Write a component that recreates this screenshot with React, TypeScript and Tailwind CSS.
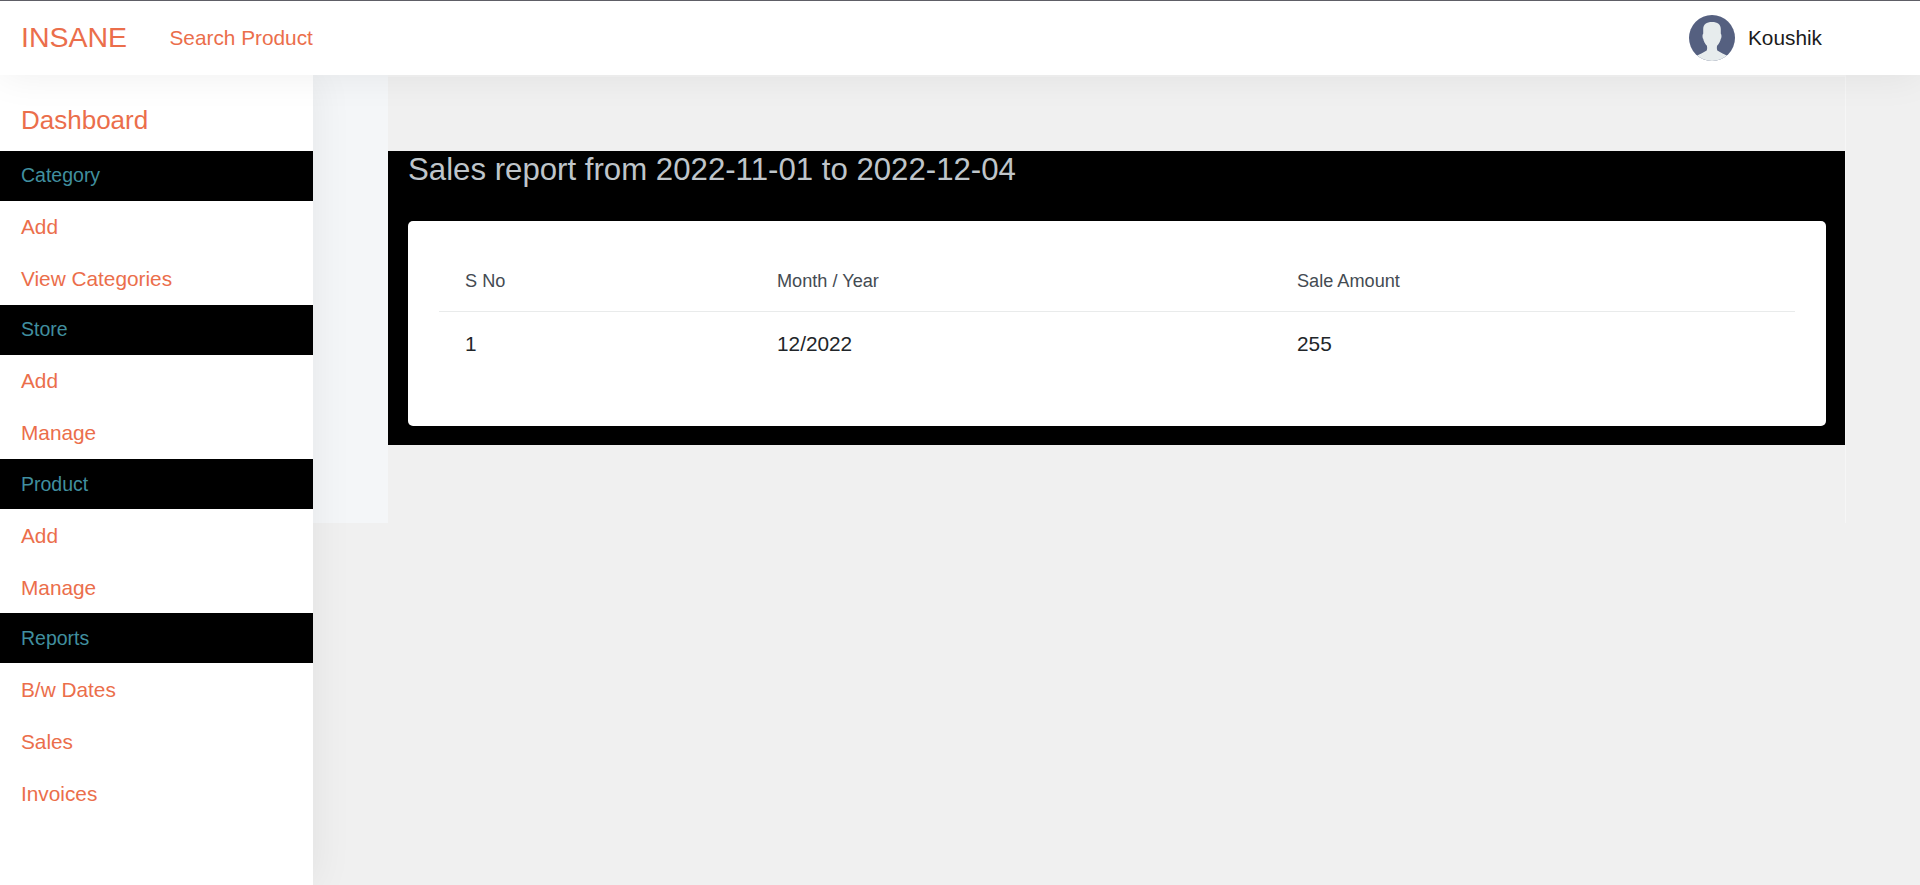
const groups = [
  { title: "Category", items: ["Add", "View Categories"], nudge: "" },
  { title: "Store", items: ["Add", "Manage"], nudge: "" },
  { title: "Product", items: ["Add", "Manage"], nudge: "pt-[2px]" },
  { title: "Reports", items: ["B/w Dates", "Sales", "Invoices"], nudge: "pt-[2px]" },
];

const rows = [{ no: "1", month: "12/2022", amount: "255" }];

function Avatar() {
  return (
    <svg viewBox="0 0 46 46" className="size-[46px]">
      <defs>
        <clipPath id="avatar">
          <circle cx="23" cy="23" r="23" />
        </clipPath>
      </defs>
      <g clipPath="url(#avatar)">
        <rect width="46" height="46" fill="#556080" />
        <path
          d="M14.200 14C14.200 9.500 17.500 7 23 7s8.800 2.500 8.800 7v4.800c.9.500.9 4.200 0 4.900-.5 2.800-1.800 5-3.700 7.100-.4 1.800-.3 3.300.2 4.700 3.500 2.400 7 3.700 10.700 5.700V47H7v-5.800c3.700-2 7.200-3.300 10.700-5.700.5-1.400.6-2.900.2-4.700-1.900-2.100-3.200-4.300-3.700-7.100-.9-.7-.9-4.400 0-4.900z"
          fill="#e7eced"
        />
      </g>
    </svg>
  );
}

function Header() {
  return (
    <header className="relative z-20 flex h-[75px] shrink-0 items-center border-t border-[#5e5e66] bg-white shadow-[0_0_40px_rgba(0,0,0,0.07)]">
      <a className="w-[149px] pb-[2px] pl-[21px] text-[28.5px] leading-[43px] text-[#eb6e4b]">INSANE</a>
      <a className="ml-[20.5px] text-[20.8px] text-[#eb6e4b]">Search Product</a>
      <div className="mr-[98px] ml-auto flex items-center gap-[13px]">
        <Avatar />
        <span className="text-[20.8px] text-[#1b1b1b]">Koushik</span>
      </div>
    </header>
  );
}

function Sidebar() {
  return (
    <nav className="relative z-10 w-[313px] shrink-0 bg-white shadow-[0_0_40px_rgba(0,0,0,0.07)]">
      <a className="flex h-[76px] items-center pt-[14px] pl-[21px] text-[26px] text-[#eb6e4b]">Dashboard</a>
      {groups.map((group) => (
        <section key={group.title}>
          <h2 className={`flex h-[50px] items-center bg-black pl-[21px] text-[19.5px] text-[#408f9f] ${group.nudge}`}>
            {group.title}
          </h2>
          {group.items.map((item) => (
            <a key={item} className={`flex h-[52px] items-center pl-[21px] text-[20.8px] text-[#eb6e4b] ${group.nudge}`}>
              {item}
            </a>
          ))}
        </section>
      ))}
    </nav>
  );
}

function Report() {
  return (
    <section className="h-[294px] bg-black px-5 pr-[19px]">
      <h1 className="h-[70px] text-[31.2px] leading-[37px] text-[#bfc5ca]">Sales report from 2022-11-01 to 2022-12-04</h1>
      <div className="h-[205px] rounded-[5px] bg-white px-[31px] pt-[30px]">
        <table className="w-full table-fixed border-separate border-spacing-0 text-left">
          <colgroup>
            <col className="w-[312px]" />
            <col className="w-[520px]" />
            <col />
          </colgroup>
          <thead>
            <tr className="text-[18.15px] text-[#444b52]">
              <th className="h-[61px] border-b border-[#e9ebeb] pt-[2px] pl-[26px] font-normal">S No</th>
              <th className="h-[61px] border-b border-[#e9ebeb] pt-[2px] pl-[26px] font-normal">Month / Year</th>
              <th className="h-[61px] border-b border-[#e9ebeb] pt-[2px] pl-[26px] font-normal">Sale Amount</th>
            </tr>
          </thead>
          <tbody>
            {rows.map((row) => (
              <tr key={row.no} className="h-[64px] text-[20.8px] text-[#212529]">
                <td className="pl-[26px]">{row.no}</td>
                <td className="pl-[26px]">{row.month}</td>
                <td className="pl-[26px]">{row.amount}</td>
              </tr>
            ))}
          </tbody>
        </table>
      </div>
    </section>
  );
}

export default function App() {
  return (
    <div className="flex h-[885px] w-full flex-col overflow-hidden bg-[#f0f0f0] font-['Liberation_Sans',Arial,sans-serif]">
      <Header />
      <div className="flex flex-1">
        <Sidebar />
        <main className="flex h-[448px] flex-1">
          <div className="w-[75px] bg-[#f4f6f8]" />
          <div className="w-[1458px] border-t-2 border-r border-t-[#f4f4f4] border-r-[#f6f6f6] pt-[74px]">
            <Report />
          </div>
        </main>
      </div>
    </div>
  );
}
